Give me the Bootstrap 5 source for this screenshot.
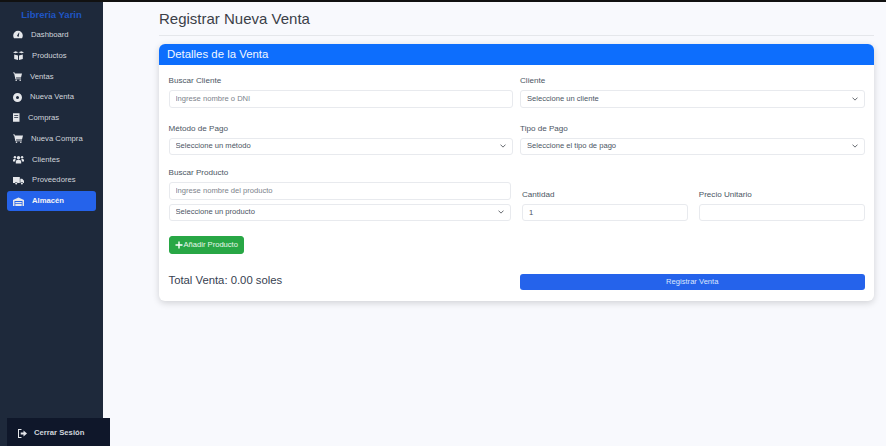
<!DOCTYPE html>
<html lang="es"><head><meta charset="utf-8"><title>Registrar Venta</title>
<link href="https://cdn.jsdelivr.net/npm/bootstrap@5.3.0/dist/css/bootstrap.min.css" rel="stylesheet">
<style>
html,body{height:100%;overflow:hidden}
body{font-family:"Liberation Sans",Arial,sans-serif;background:#f8f9fd;color:#374151;font-size:8px}
.topline{height:2px;background:#111}
.shell{height:444px}
.sidebar{width:103px;background:#1e293b;flex:none;position:relative;padding:7px 7px 0}
.brand{color:#1f55c4;font-weight:700;font-size:9.5px;line-height:11px;text-align:center;margin:0 0 4.5px}
.side-item{height:20.75px;padding:0 0 0 6px;color:#d1d5db;font-size:7.7px;border-radius:3px;text-decoration:none;display:flex;align-items:center;line-height:1}
.side-item svg{flex:none;fill:#e5e7eb;margin-right:8px}
.side-item.on{background:#2563eb;color:#f3f4f6;font-weight:700;height:20px;margin-top:.5px}
.logout{position:absolute;left:7px;right:-7px;bottom:0;height:28px;background:#0f172a;color:#d1d5db;font-weight:700;font-size:7.7px;display:flex;align-items:center;padding:2px 0 0 11px;text-decoration:none}
.logout svg{fill:#e5e7eb;margin-right:7px}
.content{padding:0 12px 0 56px;min-width:0}
.pagetitle{font-size:15px;font-weight:400;color:#3b4048;line-height:19px;margin:7px 0 7px}
.rule{border-top:1px solid #e5e7eb;opacity:1;margin:0 0 8px}
.salecard{border:0;border-radius:6px;box-shadow:0 2px 7px rgba(0,0,0,.16);background:#fff;height:257px}
.salehead{background:#0d6efd;color:#f2f7ff;font-size:11.4px;line-height:21px;height:21px;padding:0 8px;border:0;border-radius:6px 6px 0 0!important}
.salebody{padding:11px 9.5px 10px}
.salebody label{display:block;font-size:8.1px;color:#4b5563;line-height:10px;margin-bottom:4px}
.fld{height:17.5px;min-height:0;font-size:7.6px;line-height:1;padding:0 6px;border:1px solid #e8eaee;border-radius:3px;color:#4b5563;background-color:#fff;box-shadow:none}
.fld::placeholder{color:#7d838c}
select.fld{background-size:6px 6px;background-position:right 6px center;padding-right:16px}
.g-a{--bs-gutter-x:7px;--bs-gutter-y:0}
.g-b{--bs-gutter-x:11px;--bs-gutter-y:0}
.rowa{margin-bottom:16px}
.rowb{margin-bottom:13px}
.stack .fld+.fld{margin-top:4px}
.addbtn{background:#28a745;border:1px solid #28a745;color:#e9f7ec;font-size:7.6px;line-height:1;height:18px;padding:0 5px;border-radius:3px;display:inline-flex;align-items:center;margin-top:15px}
.addbtn svg{margin-right:1px;fill:#fff}
.totalrow{margin-top:16px}
.totaltxt{font-size:11.3px;color:#374151;line-height:14px;margin:0}
.regbtn{background:#2563eb;border:0;color:#dbe7fd;font-size:7.6px;height:16px;line-height:16px;padding:0;border-radius:3px;width:100%;display:block;margin-top:4px}
</style></head>
<body>
<div class="topline"></div>
<div class="d-flex shell">
<nav class="sidebar">
<p class="brand">Libreria Yarin</p>
<a class="side-item" href="#"><svg width="10" height="9" viewBox="0 0 10 9"><path d="M5 .8a4.8 4.8 0 0 0-4.8 4.8c0 1 .3 1.8.8 2.6h8c.5-.8.8-1.600.8-2.600A4.800 4.800 0 0 0 5 .8zm.8 5.600a1 1 0 0 1-1.700-.8l1.900-3 .3.1-.5 3.400z"/></svg>Dashboard</a>
<a class="side-item" href="#"><svg width="11" height="9" viewBox="0 0 11 9"><path d="M0 1.500 2.500.3l3 1-3 1zM11 1.500 8.500.3l-3 1 3 1zM1.200 3.500l3.800 1V9l-3.800-1zM9.800 3.500 6 4.500V9l3.800-1z"/></svg>Productos</a>
<a class="side-item" href="#"><svg width="9" height="9" viewBox="0 0 9 9"><path d="M0 .5h1.700l.3 1H9L8 5.500H3l.2 1H8V7.300H2.400L1.100 1.300H0z"/><circle cx="3.200" cy="8.200" r=".8"/><circle cx="7.200" cy="8.200" r=".8"/></svg>Ventas</a>
<a class="side-item" href="#"><svg width="9" height="9" viewBox="0 0 9 9"><path fill-rule="evenodd" d="M4.500 0a4.500 4.500 0 1 0 0 9 4.500 4.500 0 0 0 0-9zm0 3a1.500 1.500 0 1 1 0 3 1.500 1.500 0 0 1 0-3z"/></svg>Nueva Venta</a>
<a class="side-item" href="#"><svg width="7" height="9" viewBox="0 0 7 9"><path fill-rule="evenodd" d="M0 .3h6.500v8.400H0zM1.200 2v.8h4V2zm0 2v.8h4V4z"/></svg>Compras</a>
<a class="side-item" href="#"><svg width="10" height="9" viewBox="0 0 10 9"><path d="M0 .5h1.800l.3 1H10L9 5.500H3l.2 1H9V7.300H2.400L1.100 1.300H0z"/><circle cx="3.500" cy="8.200" r=".8"/><circle cx="7.800" cy="8.200" r=".8"/></svg>Nueva Compra</a>
<a class="side-item" href="#"><svg width="11" height="9" viewBox="0 0 11 9"><circle cx="5.500" cy="2.800" r="1.700"/><circle cx="1.900" cy="2.200" r="1.200"/><circle cx="9.100" cy="2.200" r="1.200"/><path d="M2.800 8.500V6.700c0-1.200 1-1.900 2.700-1.900s2.700.7 2.700 1.900v1.800zM0 6.500V5.300c0-.9.700-1.400 1.900-1.400l.8.1-.7 2.500zm11 0V5.300c0-.9-.7-1.400-1.900-1.400l-.8.1.7 2.500z"/></svg>Clientes</a>
<a class="side-item" href="#"><svg width="11" height="9" viewBox="0 0 11 9"><path d="M0 1h6.800v6H4.500a1.400 1.400 0 0 0-2.600 0H0zM7.300 2.800h1.900L11 4.700V7h-.8a1.400 1.400 0 0 0-2.600-.2l-.3.100z"/><circle cx="3.200" cy="7.500" r="1"/><circle cx="8.900" cy="7.500" r="1"/></svg>Proveedores</a>
<a class="side-item on" href="#"><svg width="11" height="9" viewBox="0 0 11 9"><path fill-rule="evenodd" d="M0 3 5.500.4 11 3v6H9.500V4H1.500v5H0zM2.300 5h6.400v1H2.300zm0 1.700h6.400V9H2.300z"/></svg>Almacén</a>
<a class="logout" href="#"><svg width="9" height="9" viewBox="0 0 9 9"><path d="M3.500 1H1v7h2.500v1H0V0h3.500zM5.500 1.500 9 4.500l-3.500 3V5.600H2.700V3.400h2.800z"/></svg>Cerrar Sesión</a>
</nav>
<main class="content flex-grow-1">
<h1 class="pagetitle">Registrar Nueva Venta</h1>
<hr class="rule">
<div class="card salecard">
<div class="card-header salehead">Detalles de la Venta</div>
<div class="card-body salebody">
<form>
<div class="row g-a rowa">
<div class="col-6"><label>Buscar Cliente</label><input class="form-control fld" placeholder="Ingrese nombre o DNI"></div>
<div class="col-6"><label>Cliente</label><select class="form-select fld"><option>Seleccione un cliente</option></select></div>
</div>
<div class="row g-a rowb">
<div class="col-6"><label>Método de Pago</label><select class="form-select fld"><option>Seleccione un método</option></select></div>
<div class="col-6"><label>Tipo de Pago</label><select class="form-select fld"><option>Seleccione el tipo de pago</option></select></div>
</div>
<div class="row g-b align-items-end">
<div class="col-6 stack"><label>Buscar Producto</label><input class="form-control fld" placeholder="Ingrese nombre del producto"><select class="form-select fld"><option>Seleccione un producto</option></select></div>
<div class="col-3"><label>Cantidad</label><input class="form-control fld" value="1"></div>
<div class="col-3"><label>Precio Unitario</label><input class="form-control fld"></div>
</div>
<button type="button" class="btn addbtn"><svg width="8" height="8" viewBox="0 0 8 8"><path d="M3.300.5h1.400v2.800h2.800v1.400H4.700v2.800H3.300V4.700H.5V3.300h2.800z"/></svg>Añadir Producto</button>
<div class="row g-a totalrow align-items-center">
<div class="col-6"><p class="totaltxt">Total Venta: 0.00 soles</p></div>
<div class="col-6"><button type="button" class="btn regbtn">Registrar Venta</button></div>
</div>
</form>
</div>
</div>
</main>
</div>
<script src="https://cdn.jsdelivr.net/npm/bootstrap@5.3.0/dist/js/bootstrap.bundle.min.js"></script>
</body></html>
